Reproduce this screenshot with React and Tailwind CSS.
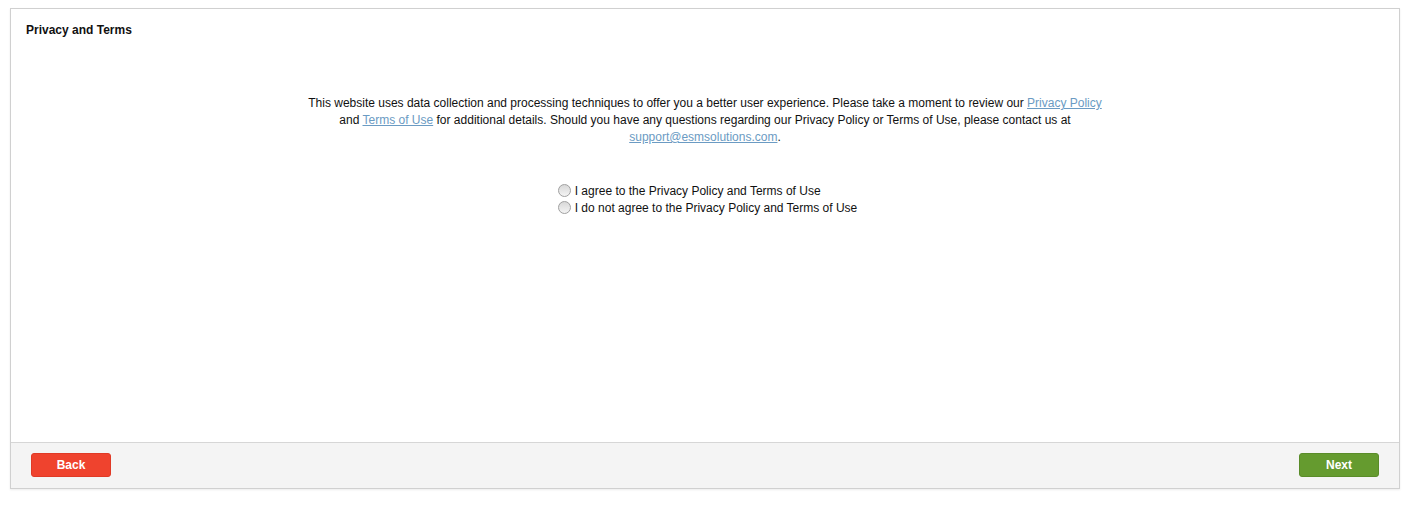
function Radio({ label }) {
  return (
    <label className="flex items-center h-[17px] cursor-pointer">
      <span className="w-[13px] h-[13px] rounded-full border border-[#a0a0a0] bg-gradient-to-b from-[#d8d8d8] to-[#f4f4f4] mr-[4px]"></span>
      <span>{label}</span>
    </label>
  )
}

export default function App() {
  return (
    <div className="w-[1409px] h-[506px] bg-white pt-[8px] px-[10px] font-['Liberation_Sans',Arial,sans-serif] text-[12px] text-[#111]">
      <div className="w-[1390px] h-[481px] border border-[#d0d0d0] shadow-[0_1px_2px_rgba(0,0,0,0.08)] flex flex-col">
        <div className="flex-1 bg-white">
          <h1 className="font-bold text-[12px] leading-[14px] pl-[15px] pt-[14px]">Privacy and Terms</h1>
          <p className="w-[800px] mx-auto text-center leading-[17px] mt-[58px]">
            This website uses data collection and processing techniques to offer you a better user experience. Please take a moment to review our{" "}
            <a href="#" className="text-[#6b9bc3] underline">Privacy Policy</a> and{" "}
            <a href="#" className="text-[#6b9bc3] underline">Terms of Use</a> for additional details. Should you have any questions regarding our Privacy Policy or Terms of Use, please contact us at{" "}
            <a href="#" className="text-[#6b9bc3] underline">support@esmsolutions.com</a>.
          </p>
          <div className="flex justify-center mt-[36px]">
            <div className="flex flex-col pl-[5px]">
              <Radio label="I agree to the Privacy Policy and Terms of Use" />
              <Radio label="I do not agree to the Privacy Policy and Terms of Use" />
            </div>
          </div>
        </div>
        <div className="h-[46px] border-t border-[#d6d6d6] bg-[#f4f4f4] flex items-start justify-between pl-[20px] pr-[20px] pt-[10px]">
          <button className="w-[80px] h-[24px] rounded-[3px] bg-[#ef432e] border border-[#e03a26] text-white font-bold text-[12px]">Back</button>
          <button className="w-[80px] h-[24px] rounded-[3px] bg-[#659b2f] border border-[#5a8c29] text-white font-bold text-[12px]">Next</button>
        </div>
      </div>
    </div>
  )
}
